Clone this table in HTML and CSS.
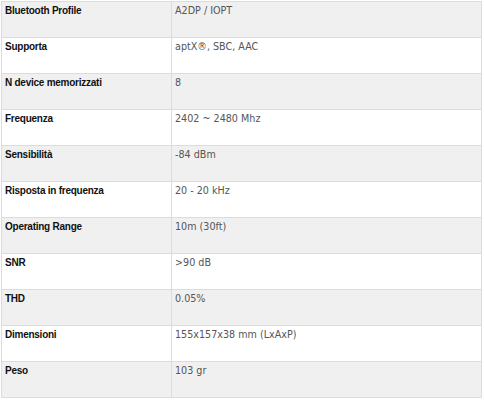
FILE: index.html
```html
<!DOCTYPE html>
<html>
<head>
<meta charset="utf-8">
<link rel="stylesheet" href="styles.css">
</head>
<body>
<table class="specs">
<tr class="odd"><th>Bluetooth Profile</th><td>A2DP / IOPT</td></tr>
<tr><th>Supporta</th><td>aptX®, SBC, AAC</td></tr>
<tr class="odd"><th>N device memorizzati</th><td>8</td></tr>
<tr><th>Frequenza</th><td>2402 ~ 2480 Mhz</td></tr>
<tr class="odd"><th>Sensibilità</th><td>-84 dBm</td></tr>
<tr><th>Risposta in frequenza</th><td>20 - 20 kHz</td></tr>
<tr class="odd"><th>Operating Range</th><td>10m (30ft)</td></tr>
<tr><th>SNR</th><td>&gt;90 dB</td></tr>
<tr class="odd"><th>THD</th><td>0.05%</td></tr>
<tr><th>Dimensioni</th><td>155x157x38 mm (LxAxP)</td></tr>
<tr class="odd"><th>Peso</th><td>103 gr</td></tr>
</table>
</body>
</html>
```
FILE: styles.css
```css
html, body {
  margin: 0;
  padding: 0;
  background: #fff;
}
.specs {
  margin: 1px 0 0 1px;
  width: 481px;
  border-collapse: collapse;
}
.specs th, .specs td {
  border: 1px solid #dcdcdc;
  height: 36px;
  padding: 3px 3px 0 3px;
  vertical-align: top;
  text-align: left;
  box-sizing: border-box;
}
.specs th {
  width: 170px;
  font-family: "Liberation Sans", Arial, sans-serif;
  font-size: 10px;
  letter-spacing: -0.25px;
  font-weight: bold;
  color: #111;
}
.specs td {
  font-family: "DejaVu Sans", Verdana, sans-serif;
  font-size: 9.6px;
  color: #555;
}
.specs tr.odd {
  background: #f0f0f0;
}
```
